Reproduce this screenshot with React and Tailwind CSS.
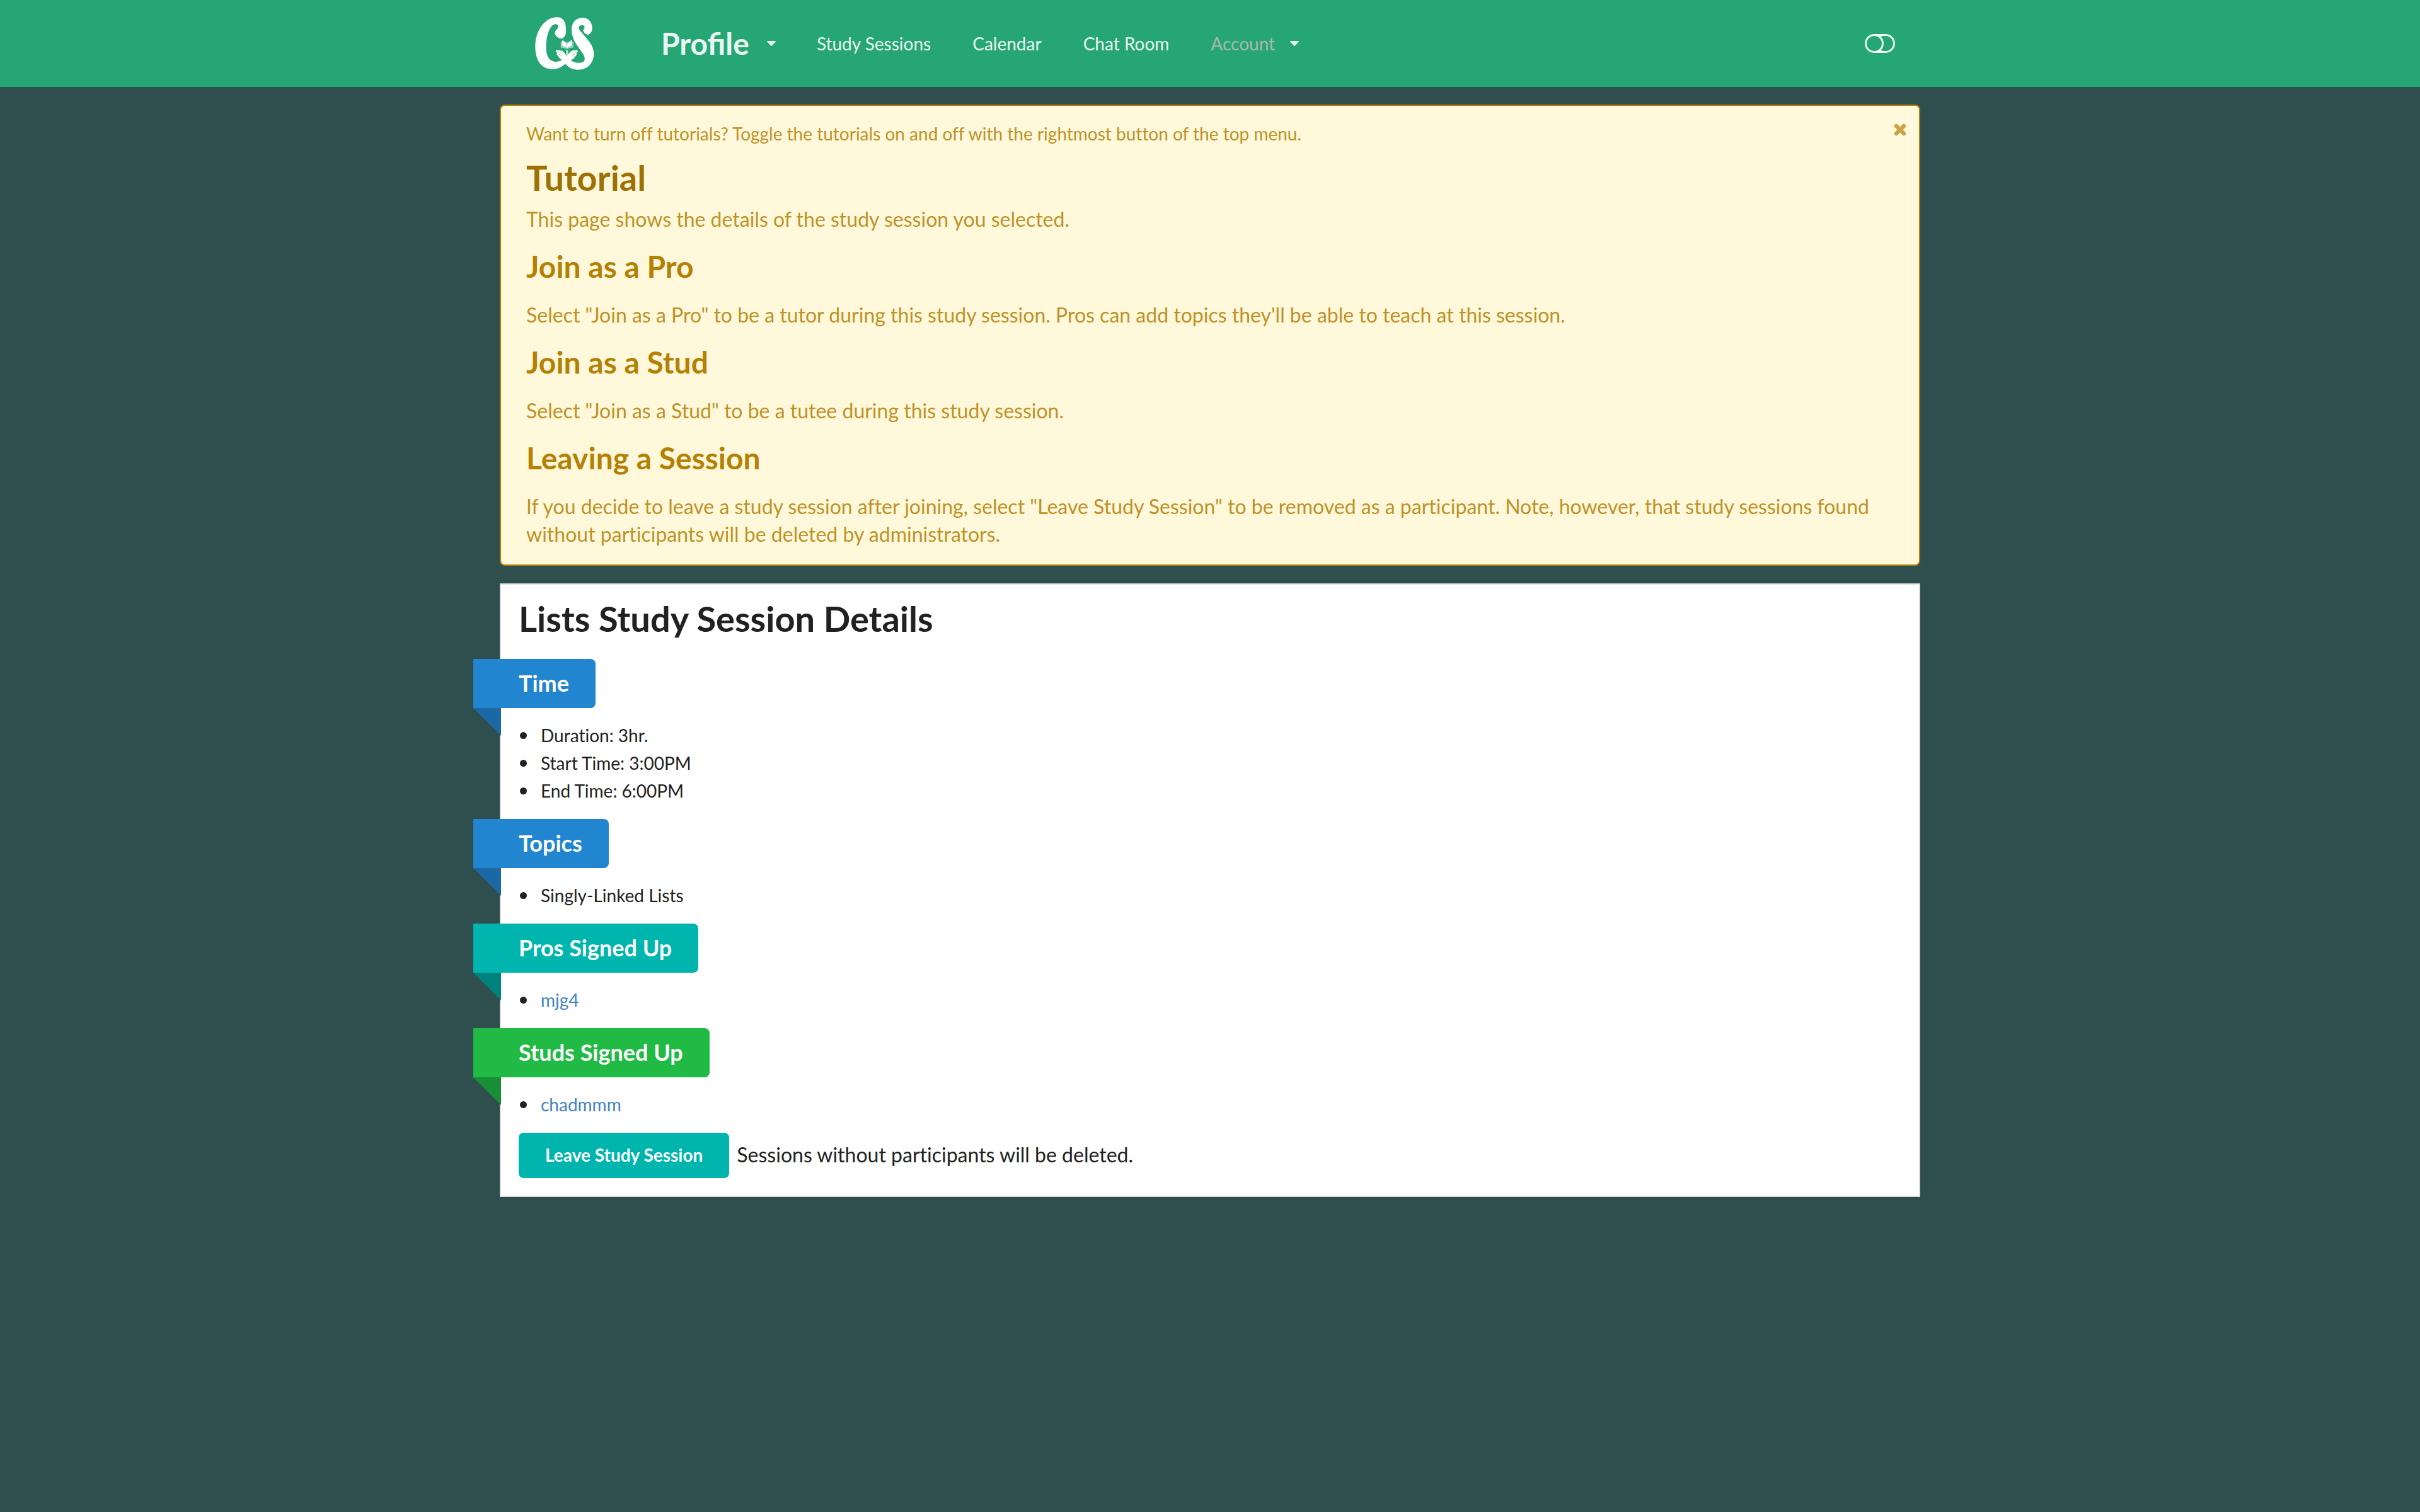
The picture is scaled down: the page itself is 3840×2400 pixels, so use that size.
function Logo() {
  return (
    <svg viewBox="56 49 281 253" className="h-[84px] w-[94px]" fill="#fff" role="img" aria-label="CS">
      <path d="M203 112C203 74 190 50 160 50C104 50 56 112 56 190C56 256 84 298 137 298C168 298 190 284 204 267L192 248C178 262 162 264 146 262C120 258 108 232 108 196C108 140 124 86 152 83C164 83 168 92 164 102C158 110 149 116 150 128C154 144 170 152 182 152C197 148 203 132 203 112Z" />
      <path d="M309 133C322 131 329 115 328 99C326 70 308 53 283 53C250 53 230 75 230 110C230 150 252 180 270 205C288 230 297 243 290 260C282 271 252 270 236 262C228 258 222 253 217 246L196 268C212 290 235 301 260 301C305 301 336 270 336 222C334 186 312 164 294 142C278 122 264 112 264 101C264 92 272 87 282 88C292 90 294 95 290 102C285 110 284 118 290 124C296 130 303 133 309 133Z" />
      <path d="M206 178C201 170 193 164 184 160V186C193 188 201 193 206 198ZM209 178C214 170 222 164 231 160V186C222 188 214 193 209 198Z" />
      <path d="M179 167V194C190 194 200 197 207 201C215 197 225 194 237 194V167" fill="#fff" fillOpacity="0.4" stroke="#fff" strokeOpacity="0.8" strokeWidth="2" />
      <path d="M204 207V240M211 207V240" fill="none" stroke="#fff" strokeWidth="3" />
      <path d="M206 272L184 254C176 250 170 245 167 238L157 226L162 223L153 212L160 206L186 211L198 224L207 238L216 224L228 211L254 206L260 212L251 223L256 226L247 238C243 245 238 250 230 254Z" />
      <path d="M162 213L184 225M165 225L184 236M251 213L230 225M248 225L230 236" fill="none" stroke="#26a674" strokeWidth="1.5" />
    </svg>
  );
}

function Caret() {
  return (
    <svg viewBox="0 0 14 8" className="h-[8px] w-[14px]" fill="currentColor" aria-hidden="true">
      <path d="M1 0H13Q14.500 0 13.500 1.500L8 7.500Q7 8.500 6 7.500L.5 1.500Q-.5 0 1 0Z" />
    </svg>
  );
}

function NavBar() {
  return (
    <header className="bg-[#26a674]">
      <nav className="mx-auto flex h-[138px] w-full max-w-[2254px] items-center text-[28px] text-white/90">
        <a href="#home" className="mr-[74px] ml-14">
          <Logo />
        </a>
        <button type="button" className="flex items-center gap-7 px-8 text-[48px] font-bold">
          Profile
          <Caret />
        </button>
        <a href="#sessions" className="px-[33px]">Study Sessions</a>
        <a href="#calendar" className="px-[33px]">Calendar</a>
        <a href="#chat" className="px-[33px]">Chat Room</a>
        <button type="button" className="flex items-center gap-6 px-[33px]">
          <span className="text-[#a9b9b1]">Account</span>
          <Caret />
        </button>
        <button type="button" aria-label="Toggle tutorials" className="mr-10 ml-auto">
          <svg viewBox="0 0 48 30" className="h-[30px] w-[48px]" fill="none" stroke="currentColor" strokeWidth="3">
            <rect x="1.500" y="1.500" width="45" height="27" rx="13.500" />
            <path d="M15 1.500A13.500 13.500 0 0 1 15 28.500M21 2.500H28M21 27.500H28" />
          </svg>
        </button>
      </nav>
    </header>
  );
}

const steps = [
  {
    title: "Join as a Pro",
    text: "Select \"Join as a Pro\" to be a tutor during this study session. Pros can add topics they'll be able to teach at this session.",
  },
  {
    title: "Join as a Stud",
    text: 'Select "Join as a Stud" to be a tutee during this study session.',
  },
  {
    title: "Leaving a Session",
    text: 'If you decide to leave a study session after joining, select "Leave Study Session" to be removed as a participant. Note, however, that study sessions found without participants will be deleted by administrators.',
  },
];

function Tutorial() {
  return (
    <section className="relative mt-7 rounded-[8px] border-2 border-[#b58105] bg-[#fff8db] px-10 pt-6 pb-[26px] text-[#b58105] [font-variant-ligatures:none]">
      <button type="button" aria-label="Close" className="absolute top-7 right-5 opacity-70">
        <svg viewBox="0 0 20 20" className="h-[20px] w-[20px]" stroke="currentColor" strokeWidth="6.500" strokeLinecap="round">
          <path d="M4 4L16 16M16 4L4 16" />
        </svg>
      </button>
      <p className="text-[28px] leading-[40px] opacity-85">
        Want to turn off tutorials? Toggle the tutorials on and off with the rightmost button of the top menu.
      </p>
      <h1 className="mt-[14px] text-[56px] leading-[72px] font-bold text-[#9e7104]">Tutorial</h1>
      <p className="mt-2 text-[32px] leading-[44px] opacity-85">
        This page shows the details of the study session you selected.
      </p>
      {steps.map((s) => (
        <div key={s.title}>
          <h2 className="mt-[22px] text-[48px] leading-[62px] font-bold">{s.title}</h2>
          <p className="mt-6 text-[32px] leading-[44px] opacity-85">{s.text}</p>
        </div>
      ))}
    </section>
  );
}

const groups = [
  { title: "Time", color: "bg-[#2185d0]", fold: "text-[#1a69a4]", items: ["Duration: 3hr.", "Start Time: 3:00PM", "End Time: 6:00PM"] },
  { title: "Topics", color: "bg-[#2185d0]", fold: "text-[#1a69a4]", items: ["Singly-Linked Lists"] },
  { title: "Pros Signed Up", color: "bg-[#00b5ad]", fold: "text-[#00827c]", items: ["mjg4"], linked: true },
  { title: "Studs Signed Up", color: "bg-[#21ba45]", fold: "text-[#198f35]", items: ["chadmmm"], linked: true },
];

function Group({ title, color, fold, items, linked }) {
  return (
    <section>
      <h2 className={`relative -ml-[72px] w-fit rounded-r-[8px] pr-[42px] pb-[2px] pl-[72px] text-[36px] leading-[76px] font-bold text-white ${color}`}>
        {title}
        <svg viewBox="0 0 44 44" className={`absolute top-full left-0 size-11 ${fold}`} fill="currentColor" aria-hidden="true">
          <path d="M0 0H44V44Z" />
        </svg>
      </h2>
      <ul className="mt-[21px] mb-[23px] text-[28px] leading-[44px]">
        {items.map((item) => (
          <li key={item} className="flex items-center gap-[22px] before:ml-[2px] before:size-[11px] before:rounded-full before:bg-[#212121]">
            {linked ? <a href={`#${item}`} className="text-[#4183c4]">{item}</a> : item}
          </li>
        ))}
      </ul>
    </section>
  );
}

function SessionDetails() {
  return (
    <main className="mt-7 border-2 border-[#dededf] bg-white px-7 pt-[18px] pb-7 text-[#212121] shadow-[0_2px_4px_rgba(34,36,38,0.15)] [font-variant-ligatures:none]">
      <h1 className="mb-7 text-[56px] leading-[72px] font-bold">Lists Study Session Details</h1>
      {groups.map((g) => (
        <Group key={g.title} {...g} />
      ))}
      <div className="flex items-center gap-3">
        <button type="button" className="h-[72px] rounded-[8px] bg-[#00b5ad] px-[42px] pb-[2px] text-[28px] font-bold text-white">
          Leave Study Session
        </button>
        <span className="pb-[2px] text-[32px]">Sessions without participants will be deleted.</span>
      </div>
    </main>
  );
}

export default function App() {
  return (
    <div className="min-h-screen bg-[#2f4f4f] font-[Lato,sans-serif]">
      <NavBar />
      <div className="mx-auto w-full max-w-[2254px]">
        <Tutorial />
        <SessionDetails />
      </div>
    </div>
  );
}
